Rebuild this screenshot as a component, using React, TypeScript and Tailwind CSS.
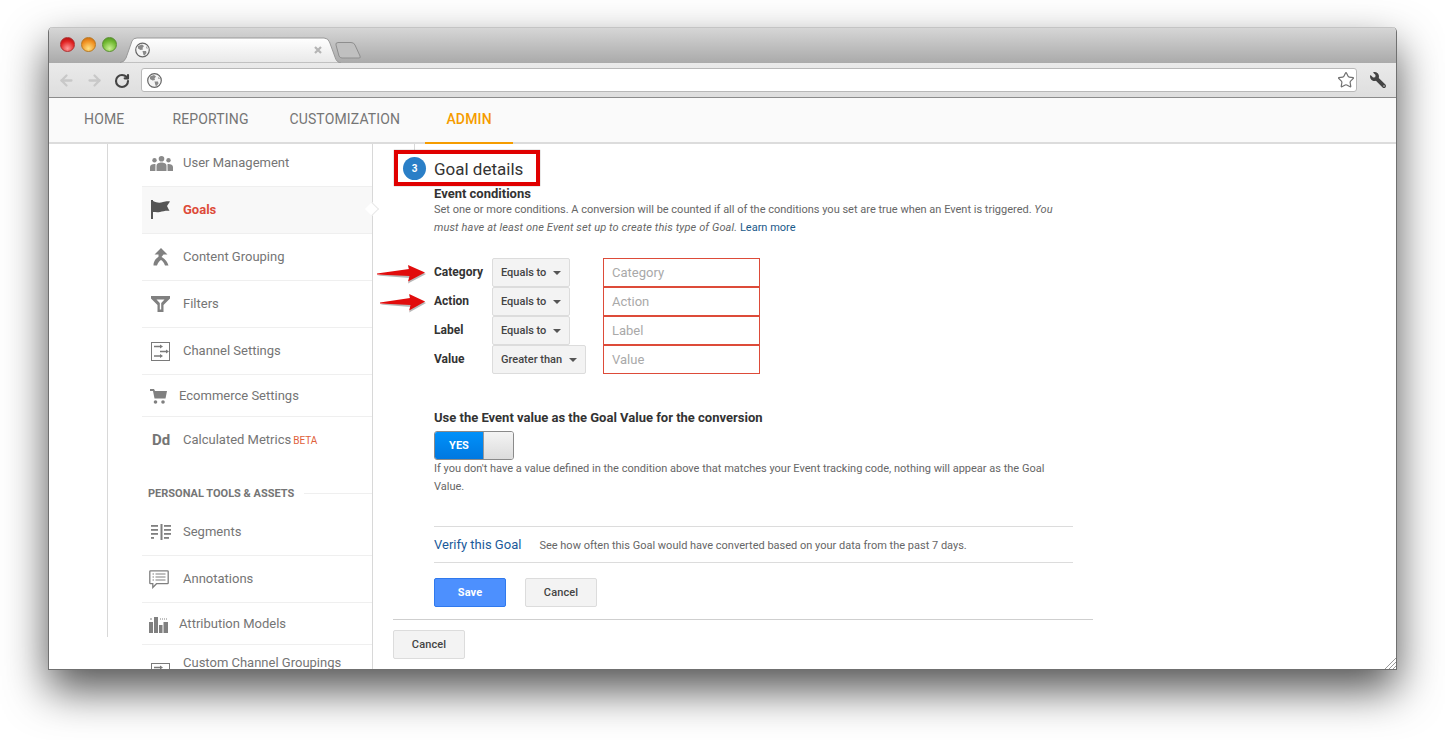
import React from "react";
import { ArrowLeft, ArrowRight, RotateCw, Star } from "lucide-react";
import { FaWrench } from "react-icons/fa";

const Globe = ({ x = 0, y = 0 }: { x?: number; y?: number }) => (
  <g transform={`translate(${x} ${y})`}>
    <circle cx="7.5" cy="7.5" r="6.8" fill="#f4f4f4" stroke="#666" strokeWidth="1.2" />
    <path d="M3 3.5 L7 2 L9 3.5 L7.5 5.5 L8 7 L5.5 7.5 L3 6 Z" fill="#8a8a8a" />
    <path d="M7.5 8.5 L11 8.5 L11.5 10.5 L9.5 13 L8.5 12.5 Z" fill="#8a8a8a" />
    <path d="M11 3.5 L13 6 L11.5 6 Z" fill="#8a8a8a" />
  </g>
);

const UsersIcon = () => (
  <svg width="23" height="15" viewBox="0 0 23 15" fill="#8a8a8a" className="ml-[1px]">
    <circle cx="11.5" cy="2.8" r="2.8" />
    <circle cx="4.5" cy="4.2" r="2.2" />
    <circle cx="18.5" cy="4.2" r="2.2" />
    <path d="M6.5 15 V10 C6.5 7.5 9 6.6 11.5 6.6 C14 6.6 16.5 7.5 16.5 10 V15 Z" />
    <path d="M0 15 V11 C0 8.6 2.5 7.8 5.4 8 C5.6 9 5.4 12 5.4 15 Z" />
    <path d="M23 15 V11 C23 8.6 20.5 7.8 17.6 8 C17.4 9 17.6 12 17.6 15 Z" />
  </svg>
);
const FlagIcon = () => (
  <svg width="20" height="20" viewBox="0 0 20 20" fill="#555" className="ml-[2px]">
    <rect x="0" y="0" width="2" height="19" />
    <path d="M2 1 C6 3 9 3 12 2 C14 1.500 17 1 19 1.500 L16 6 L18.500 11 C15 10.500 12 11.500 9 12 C6 12.500 4 12 2 12 Z" />
  </svg>
);
const MergeIcon = () => (
  <svg width="16" height="18" viewBox="0 0 16 18" fill="#808080">
    <path d="M8 0 L14.500 6.500 H10.500 L8.500 9 C11 10.500 14 12.500 15.500 17.500 H12 C11 14.500 9.500 13 8 12 C6.500 13 5 14.500 4 17.500 H0.500 C0.500 13 3 10.500 5.500 8.800 L5.500 6.500 H1.500 Z" />
  </svg>
);
const FilterIcon = () => (
  <svg width="19" height="16" viewBox="0 0 19 16" fill="#808080" className="ml-[2px]">
    <path d="M0 0 H19 V2.500 L12.500 9 V16 H6.500 V9 L0 2.500 Z M5.500 3.500 L8.800 7 V13.500 H10.200 V7 L13.500 3.500 Z" fillRule="evenodd" />
  </svg>
);
const ChannelIcon = () => (
  <svg width="19" height="19" viewBox="0 0 19 19" fill="none" stroke="#7a7a7a">
    <rect x="0.500" y="0.500" width="18" height="18" strokeWidth="1" />
    <path d="M3 4.500 H9 M3 14 H9 M9 9.500 H15" strokeWidth="1.500" />
    <path d="M9 2.500 L12 4.500 L9 6.500 Z M9 12 L12 14 L9 16 Z M15 7.500 L18 9.500 L15 11.500 Z" fill="#7a7a7a" stroke="none" />
  </svg>
);
const CartIcon = () => (
  <svg width="17" height="15" viewBox="0 0 17 15" fill="#808080" className="ml-[1px]">
    <path d="M0 0 H4 L5 2 H17 L15.500 9.500 H4.500 L3 2 H0 Z" />
    <circle cx="5.500" cy="13" r="1.800" />
    <circle cx="13" cy="13" r="1.800" />
  </svg>
);
const SegmentsIcon = () => (
  <svg width="20" height="16" viewBox="0 0 20 16" fill="#808080">
    <rect x="9.500" y="0" width="2" height="16" />
    <rect x="0" y="1" width="7" height="1.800" />
    <rect x="0" y="5" width="7" height="1.800" />
    <rect x="0" y="9" width="7" height="1.800" />
    <rect x="0" y="13" width="3" height="1.800" />
    <rect x="13" y="1" width="7" height="1.800" />
    <rect x="13" y="5" width="7" height="1.800" />
    <rect x="13" y="9" width="7" height="1.800" />
    <rect x="13" y="13" width="5" height="1.800" />
  </svg>
);
const NotesIcon = () => (
  <svg width="20" height="19" viewBox="0 0 20 19" fill="none" stroke="#808080">
    <path d="M1.500 0.800 H18.500 Q19.200 0.800 19.200 1.500 V13 Q19.200 13.700 18.500 13.700 H7.500 L3.800 17.500 V13.700 H1.500 Q0.800 13.700 0.800 13 V1.500 Q0.800 0.800 1.500 0.800 Z" strokeWidth="1.300" />
    <path d="M3.500 4 H5 M6.500 4 H16.500 M3.500 7 H5 M6.500 7 H16.500 M3.500 10 H5 M6.500 10 H16.500" strokeWidth="1.200" />
  </svg>
);
const BarsIcon = () => (
  <svg width="19" height="16" viewBox="0 0 19 16" fill="#808080">
    <rect x="0" y="5" width="4" height="11" />
    <rect x="5" y="0" width="4" height="16" />
    <rect x="10" y="8" width="3.500" height="8" />
    <rect x="14.500" y="5" width="4.500" height="11" />
    <path d="M1 2 h2 M11 2 h1 M13 2 h1 M15 2 h1 M17 2 h1" stroke="#808080" strokeWidth="1" />
  </svg>
);

type Row = { label: string; icon: React.ReactNode; h: string; tight?: boolean; active?: boolean; beta?: boolean; noBorder?: boolean };

const Item = ({ label, icon, h, tight, active, beta, noBorder }: Row) => (
  <div className={`relative flex items-center pl-[7px] ${h} ${noBorder ? "" : "border-b border-[#efefef]"} ${active ? "bg-[#f8f8f8]" : ""}`}>
    <div className={`flex items-center justify-start shrink-0 ${tight ? "w-[30px]" : "w-[34px]"}`}>{icon}</div>
    <span className={`text-[13px] leading-none -mt-[2px] ${active ? "font-bold text-[#dd4b39]" : "text-[#757575]"}`}>{label}</span>
    {beta && <span className="ml-[2px] text-[10px] leading-none text-[#e0603a] mt-[1px]">BETA</span>}
    {active && <div className="absolute -right-[5px] top-[17px] h-[10px] w-[10px] rotate-45 bg-white border-t border-r border-[#e8e8e8]" />}
  </div>
);

const Arrow = ({ top, left, width }: { top: string; left: string; width: string }) => (
  <svg className={`absolute ${top} ${left} ${width} h-[20px]`} viewBox="0 0 50 20" preserveAspectRatio="none">
    <path d="M0 10.500 L32 5.500 L31 1 L49 9 L31 18.500 L32.500 13 Z" fill="#9a9a9a" transform="translate(0 1)" opacity="0.7" />
    <path d="M0 9.500 L32 5 L31 1 L48 8.500 L31 17.500 L32.500 12 L0 10.500 Z" fill="#e10c0c" />
  </svg>
);

const Select = ({ label, w }: { label: string; w: string }) => (
  <div className={`flex h-[29px] ${w} items-center justify-between rounded-[2px] border border-[#dcdcdc] bg-[#f3f3f3] pl-[8px] pr-[8px] text-[11px] font-medium text-[#444]`}>
    <span className="mt-[2px]">{label}</span>
    <span className="h-0 w-0 border-x-[4px] border-t-[4px] border-x-transparent border-t-[#555]" />
  </div>
);

const Condition = ({ label, sel, w, ph, arrow }: { label: string; sel: string; w: string; ph: string; arrow?: React.ReactNode }) => (
  <div className="relative flex h-[29px]">
    {arrow}
    <div className="w-[58px] pt-[7px] text-[12px] leading-[14px] font-bold text-[#333]">{label}</div>
    <div className="w-[111px]"><Select label={sel} w={w} /></div>
    <div className="flex h-[29px] w-[157px] items-center border border-[#dd4b39] pl-[8px] text-[13px] text-[#a9a9a9]">{ph}</div>
  </div>
);

const Btn = ({ label, primary }: { label: string; primary?: boolean }) => (
  <div className={`flex h-[29px] w-[72px] items-center justify-center rounded-[2px] border pt-[2px] text-[11px] tracking-[0.1px] ${primary ? "border-[#3079ed] bg-[#4d90fe] font-bold text-white" : "border-[#dcdcdc] bg-[#f3f3f3] font-medium text-[#444]"}`}>
    {label}
  </div>
);

export default function App() {
  return (
    <div className="h-[740px] w-[1445px] overflow-hidden bg-white pl-[48px] pt-[27px] font-['Roboto',sans-serif]">
      <div className="relative flex h-[643px] w-[1349px] flex-col overflow-hidden rounded-t-[5px] border-x border-b border-[#707070] bg-white shadow-[0_20px_44px_rgba(0,0,0,0.68)]">
        {/* title bar */}
        <div className="flex h-[36px] shrink-0 items-end border-t border-[#c4c4c4] bg-gradient-to-b from-[#d6d6d6] to-[#aaaaaa] pl-[11px]">
          <div className="mb-[11px] flex gap-[6px]">
            <span className="h-[15px] w-[15px] rounded-full border border-[#b03030] bg-[radial-gradient(circle_at_50%_80%,#ff9a9a,#e02020_60%,#a01010)]" />
            <span className="h-[15px] w-[15px] rounded-full border border-[#b97a20] bg-[radial-gradient(circle_at_50%_80%,#ffe080,#f09020_60%,#c06010)]" />
            <span className="h-[15px] w-[15px] rounded-full border border-[#5a9030] bg-[radial-gradient(circle_at_50%_80%,#c8f090,#70b830_60%,#4a8a20)]" />
          </div>
          <svg width="250" height="26" viewBox="0 0 250 26" className="ml-[3px] shrink-0">
            <defs>
              <linearGradient id="tab" x1="0" y1="0" x2="0" y2="1">
                <stop offset="0" stopColor="#ffffff" />
                <stop offset="1" stopColor="#e8e8e8" />
              </linearGradient>
            </defs>
            <path d="M222 21 H239 Q241 21 240 19 L235 8 Q234 5.500 231 5.500 H218 Q215 6 216 8 L219 19 Q220 21 222 21 Z" fill="#c0c0c0" stroke="#8e8e8e" />
            <path d="M0 25.500 Q4 25.500 6 21 L12 4 Q13 1 17 1 H204 Q208 1 209.500 5 L215 20 Q216.500 25.500 221 26 L221 26 H0 Z" fill="url(#tab)" stroke="#999" strokeWidth="1" />
            <Globe x={15} y={5.500} />
            <path d="M195 10 L201 16 M201 10 L195 16" stroke="#b5b5b5" strokeWidth="2.200" />
          </svg>
        </div>
        {/* toolbar */}
        <div className="flex h-[35px] shrink-0 items-center border-b border-[#8c8c8c] bg-gradient-to-b from-[#eaeaea] to-[#dedede]">
          <div className="flex w-[92px] items-center pl-[9px] pt-[1px]">
            <ArrowLeft size={17} strokeWidth={3.2} className="text-[#c8c8c8]" />
            <ArrowRight size={17} strokeWidth={3.2} className="ml-[11px] text-[#c8c8c8]" />
            <RotateCw size={16} strokeWidth={3.2} className="ml-[11px] text-[#444]" />
          </div>
          <div className="flex h-[24px] w-[1216px] items-center justify-between rounded-[3px] border border-[#b8b8b8] bg-white pl-[5px] pr-[1px]">
            <svg width="15" height="15" viewBox="0 0 15 15"><Globe /></svg>
            <Star size={18} strokeWidth={1.6} className="text-[#707070]" />
          </div>
          <FaWrench size={16} className="ml-[13px] -scale-x-100 text-[#444]" />
        </div>
        {/* nav */}
        <div className="flex h-[46px] shrink-0 items-stretch border-b-2 border-[#dcdcdc] bg-[#fafafa] text-[14px] leading-none tracking-[0.15px] text-[#757575]">
          <div className="ml-[35px] flex items-center pb-[2px]">HOME</div>
          <div className="ml-[48px] flex w-[77px] items-center pb-[2px]">REPORTING</div>
          <div className="ml-[40px] flex w-[111px] items-center pb-[2px]">CUSTOMIZATION</div>
          <div className="ml-[25px] -mb-[2px] flex w-[88px] items-center border-b-2 border-[#f59c00] pb-[3px] pl-[21px] font-medium text-[#f59c00]">ADMIN</div>
        </div>
        {/* body */}
        <div className="flex min-h-0 flex-1 overflow-hidden">
          <div className="flex h-[600px] w-[324px] shrink-0 pl-[58px]">
            <div className="h-[493px] w-px shrink-0 bg-[#d8d8d8]" />
            <div className="ml-[34px] h-[560px] w-[231px] shrink-0 border-r border-[#d8d8d8]">
              <Item label="User Management" icon={<UsersIcon />} h="h-[43px] pb-[4px]" />
              <Item label="Goals" icon={<FlagIcon />} h="h-[47px]" active />
              <Item label="Content Grouping" icon={<div className="pl-[4px]"><MergeIcon /></div>} h="h-[47px]" />
              <Item label="Filters" icon={<FilterIcon />} h="h-[47px]" />
              <Item label="Channel Settings" icon={<div className="pl-[2px] pt-[1px]"><ChannelIcon /></div>} h="h-[47px]" />
              <Item label="Ecommerce Settings" icon={<CartIcon />} h="h-[42px] pt-[2px]" tight />
              <Item label="Calculated Metrics" icon={<span className="pl-[3px] text-[15px] leading-none font-bold text-[#757575]">Dd</span>} h="h-[44px] pt-[2px]" beta noBorder />
              <div className="flex h-[48px] items-center pt-[16px] pl-[6px]">
                <span className="mt-[2px] text-[11px] font-bold text-[#757575]">PERSONAL TOOLS &amp; ASSETS</span>
                <div className="ml-[10px] h-px flex-1 bg-[#efefef]" />
              </div>
              <Item label="Segments" icon={<div className="pl-[2px]"><SegmentsIcon /></div>} h="h-[47px]" />
              <Item label="Annotations" icon={<NotesIcon />} h="h-[47px]" />
              <Item label="Attribution Models" icon={<BarsIcon />} h="h-[42px] pt-[2px]" tight />
              <div className="flex h-[40px] pl-[7px] pt-[10px]">
                <div className="mt-[8px] w-[34px] pl-[2px]"><ChannelIcon /></div>
                <span className="text-[13px] leading-[15px] text-[#757575]">Custom Channel Groupings</span>
              </div>
            </div>
          </div>
          <div className="relative w-[700px] pl-[20px]">
            <div className="absolute left-[41px] top-0 h-[8px] w-px bg-[#d8d8d8]" />
            <div className="relative ml-[1px] mt-[6px] flex h-[36px] w-[146px] items-center border-[4px] border-[#e00000] bg-white pl-[5px] shadow-[0_0_1px_rgba(0,0,0,0.5)]">
              <span className="flex h-[23px] w-[23px] items-center justify-center rounded-full bg-[#2a7fc7] text-[10px] font-bold text-white">3</span>
              <span className="ml-[8px] mt-[2px] text-[17px] leading-none text-[#333]">Goal details</span>
            </div>
            <div className="pl-[41px]">
              <div className="text-[13px] font-bold leading-[15px] text-[#333]">Event conditions</div>
              <p className="w-[639px] text-[11px] leading-[18px] text-[#666]">
                Set one or more conditions. A conversion will be counted if all of the conditions you set are true when an Event is triggered. <i className="tracking-[0.12px]">You must have at least one Event set up to create this type of Goal.</i> <span className="text-[#1a5a8a]">Learn more</span>
              </p>
              <div className="mt-[21px]">
                <Condition label="Category" sel="Equals to" w="w-[78px]" ph="Category" arrow={<Arrow top="top-[6px]" left="-left-[57px]" width="w-[50px]" />} />
                <Condition label="Action" sel="Equals to" w="w-[78px]" ph="Action" arrow={<Arrow top="top-[6px]" left="-left-[54px]" width="w-[47px]" />} />
                <Condition label="Label" sel="Equals to" w="w-[78px]" ph="Label" />
                <Condition label="Value" sel="Greater than" w="w-[94px]" ph="Value" />
              </div>
              <div className="mt-[36px] text-[13px] font-bold leading-[15px] text-[#333]">Use the Event value as the Goal Value for the conversion</div>
              <div className="mt-[6px] flex h-[29px] w-[80px] overflow-hidden rounded-[3px] border border-[#8a8a8a]">
                <div className="flex w-[48px] items-center justify-center bg-gradient-to-b from-[#0091fa] to-[#0078e0] pt-[2px] text-[11px] font-bold text-white">YES</div>
                <div className="flex-1 border-l border-[#999] bg-gradient-to-b from-[#f4f4f4] to-[#dcdcdc]" />
              </div>
              <p className="w-[639px] text-[11px] leading-[18px] text-[#666]">
                If you don't have a value defined in the condition above that matches your Event tracking code, nothing will appear as the Goal Value.
              </p>
              <div className="mt-[30px] flex h-[37px] w-[639px] items-center border-y border-[#dcdcdc]">
                <span className="text-[13px] text-[#1a5a9a]">Verify this Goal</span>
                <span className="ml-[18px] mt-[3px] text-[11px] text-[#666]">See how often this Goal would have converted based on your data from the past 7 days.</span>
              </div>
              <div className="mt-[15px] flex gap-[19px]">
                <Btn label="Save" primary />
                <Btn label="Cancel" />
              </div>
            </div>
            <div className="mt-[12px] h-px w-[700px] bg-[#cfcfcf]" />
            <div className="mt-[10px]"><Btn label="Cancel" /></div>
          </div>
        </div>
        <svg className="pointer-events-none absolute bottom-0 right-0" width="11" height="11" viewBox="0 0 11 11" stroke="#9a9a9a" strokeWidth="1">
          <path d="M0 11 L11 0 M4 11 L11 4 M8 11 L11 8" />
        </svg>
      </div>
    </div>
  );
}
